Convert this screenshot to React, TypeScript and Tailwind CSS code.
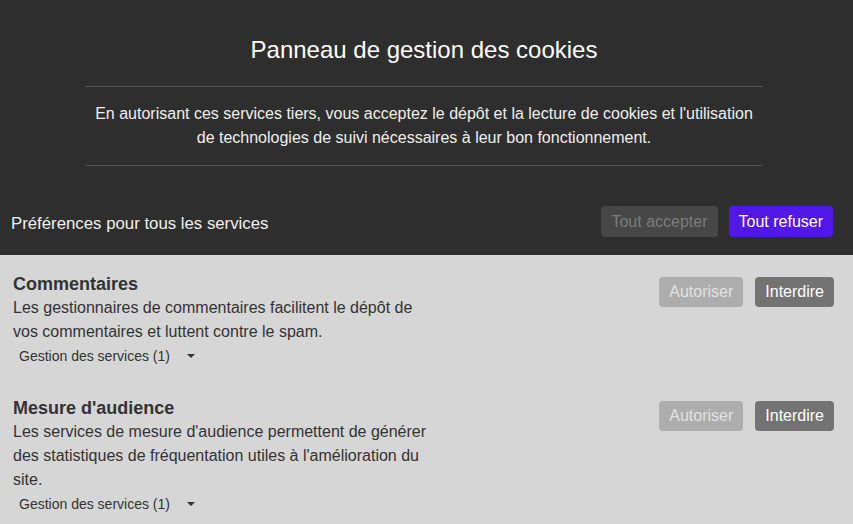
import React from 'react';

type Service = { title: string; desc: string; count: number };

const services: Service[] = [
  {
    title: 'Commentaires',
    desc: 'Les gestionnaires de commentaires facilitent le dépôt de vos commentaires et luttent contre le spam.',
    count: 1,
  },
  {
    title: "Mesure d'audience",
    desc: "Les services de mesure d'audience permettent de générer des statistiques de fréquentation utiles à l'amélioration du site.",
    count: 1,
  },
];

function Caret() {
  return (
    <svg width="8" height="4" viewBox="0 0 8 4" className="ml-[17px]">
      <path d="M0 0 L8 0 L4 4 Z" fill="#333" />
    </svg>
  );
}

function ServiceRow({ s }: { s: Service }) {
  return (
    <div className="flex justify-between pl-[13px] pr-[19px]">
      <div className="max-w-[420px]">
        <h2 className="text-[18px] leading-[24px] font-bold text-[#333]">{s.title}</h2>
        <p className="text-[16px] leading-[24px] text-[#333]">{s.desc}</p>
        <button className="flex items-center h-[20px] mt-[2px] ml-[6px] text-[14px] text-[#333]">
          Gestion des services ({s.count})
          <Caret />
        </button>
      </div>
      <div className="flex gap-[12px] mt-[5px] h-[30px]">
        <button className="h-[30px] px-[10px] rounded-[4px] bg-[#adadad] text-[#e2e2e2] text-[16px]">Autoriser</button>
        <button className="h-[30px] px-[10px] rounded-[4px] bg-[#737373] text-white text-[16px]">Interdire</button>
      </div>
    </div>
  );
}

export default function App() {
  return (
    <div className="w-[853px] h-[524px] overflow-hidden bg-[#d6d6d6]" style={{ fontFamily: '"Liberation Sans", Arial, sans-serif' }}>
      <div className="bg-[#2e2e2e]">
        <div className="ml-[85px] mr-[90px] text-center">
          <div className="pt-[35px] pb-[21px] border-b border-[#555]">
            <h1 className="text-[24px] leading-[30px] text-white">Panneau de gestion des cookies</h1>
          </div>
          <div className="pt-[15px] pb-[15px] border-b border-[#555]">
            <p className="text-[16px] leading-[24px] text-[#eee]">
              En autorisant ces services tiers, vous acceptez le dépôt et la lecture de cookies et l'utilisation de technologies de suivi nécessaires à leur bon fonctionnement.
            </p>
          </div>
        </div>
        <div className="flex items-center justify-between pl-[11px] pr-[20px] pt-[40px] pb-[18px]">
          <span className="text-[16.8px] text-[#eee] mt-[5px]">Préférences pour tous les services</span>
          <div className="flex gap-[11px]">
            <button className="h-[31px] px-[10px] rounded-[4px] bg-[#474747] text-[#7b7b7b] text-[16px]">Tout accepter</button>
            <button className="h-[31px] px-[10px] rounded-[4px] bg-[#5218ea] text-white text-[16px]">Tout refuser</button>
          </div>
        </div>
      </div>
      <div className="flex flex-col gap-[30px] pt-[17px]">
        {services.map((s) => (
          <ServiceRow key={s.title} s={s} />
        ))}
      </div>
    </div>
  );
}
